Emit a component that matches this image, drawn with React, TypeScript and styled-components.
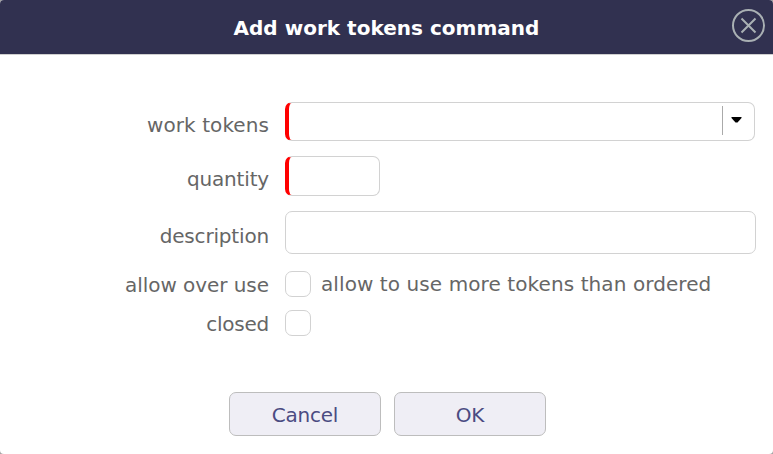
import React from "react";
import styled, { createGlobalStyle } from "styled-components";

const GlobalStyle = createGlobalStyle`
  *, *::before, *::after { box-sizing: border-box; }
  html, body { margin: 0; background: #a4a4a4; overflow: hidden; }
  body, input, button {
    font-family: Verdana, "DejaVu Sans", sans-serif;
    font-size: 20px;
  }
`;

const Dialog = styled.form`
  width: 773px;
  height: 454px;
  display: flex;
  flex-direction: column;
  background: #fff;
  border-radius: 4px;
  overflow: hidden;
`;

const Header = styled.header`
  height: 55px;
  flex: none;
  display: grid;
  grid-template-columns: 50px 1fr 50px;
  align-items: center;
  background: #313150;
  border-bottom: 1px solid #cfcfcf;
`;

const Title = styled.h1`
  grid-column: 2;
  margin: 0;
  padding-top: 2px;
  text-align: center;
  font-size: 20px;
  line-height: 24px;
  font-weight: 700;
  color: #fff;
  white-space: nowrap;
  letter-spacing: 0.02px;
`;

const CloseButton = styled.button`
  width: 34px;
  height: 34px;
  margin: 0 0 4px 8px;
  padding: 0;
  border: 0;
  background: none;
  svg { display: block; }
`;

const Fields = styled.div`
  padding-top: 47px;
  display: flex;
  flex-direction: column;
`;

const Row = styled.div<{ $height: number; $gap: number }>`
  height: ${(p) => p.$height}px;
  margin-bottom: ${(p) => p.$gap}px;
  display: grid;
  grid-template-columns: 269px 1fr;
  column-gap: 16px;
  align-items: center;
`;

const Label = styled.label<{ $drop?: number; $tracking?: number }>`
  padding-top: ${(p) => (p.$drop ?? 3) * 2}px;
  letter-spacing: ${(p) => p.$tracking ?? 0}px;
  text-align: right;
  line-height: 24px;
  color: #666;
  white-space: nowrap;
`;

const Field = styled.input<{ $width: number; $required?: boolean }>`
  width: ${(p) => p.$width}px;
  height: 100%;
  padding: 0 8px;
  border: 1px solid #d2d2d2;
  border-left: ${(p) => (p.$required ? "4px solid #f00" : "1px solid #d2d2d2")};
  border-radius: 7px;
  background: #fff;
  outline: 0;
`;

const Combo = styled.div`
  width: 470px;
  height: 100%;
  display: flex;
  align-items: center;
  justify-content: flex-end;
  border: 1px solid #d2d2d2;
  border-left: 4px solid #f00;
  border-radius: 7px;
`;

const Arrow = styled.div`
  width: 32px;
  height: 29px;
  margin-bottom: 2px;
  display: flex;
  align-items: center;
  padding: 0 0 1px 8px;
  border-left: 1px solid #aaa;
`;

const CheckGroup = styled.div`
  display: flex;
  align-items: center;
  gap: 10px;
`;

const Checkbox = styled.input.attrs({ type: "checkbox" })`
  appearance: none;
  width: 26px;
  height: 26px;
  margin: 0;
  border: 1px solid #d2d2d2;
  border-radius: 7px;
  background: #fff;
`;

const Hint = styled.span`
  line-height: 24px;
  color: #666;
  white-space: nowrap;
  letter-spacing: 0.09px;
`;

const Actions = styled.div`
  margin-top: 56px;
  padding-left: 229px;
  display: flex;
  gap: 13px;
`;

const Button = styled.button`
  width: 152px;
  height: 44px;
  padding: 2px 0 0;
  border: 1px solid #bdbdbd;
  border-radius: 7px;
  background: #efeef5;
  color: #4b4b82;
  line-height: 24px;
  letter-spacing: -0.25px;
`;

export default function App() {
  return (
    <>
      <GlobalStyle />
      <Dialog>
        <Header>
          <Title>Add work tokens command</Title>
          <CloseButton type="button" aria-label="Close">
            <svg width="34" height="34" viewBox="0 0 34 34" fill="none" stroke="#a9b0b3" strokeWidth="2">
              <circle cx="17.5" cy="17.5" r="15.5" />
              <path d="M10.5 10.5L24.5 24.5M24.5 10.5L10.5 24.5" />
            </svg>
          </CloseButton>
        </Header>
        <Fields>
          <Row $height={39} $gap={15}>
            <Label $tracking={0.08}>work tokens</Label>
            <Combo>
              <Arrow>
                <svg width="11" height="6" viewBox="0 0 11 6">
                  <path d="M0.5 0H10.5V1L6.5 5.5H4.5L0.5 1Z" fill="#000" />
                </svg>
              </Arrow>
            </Combo>
          </Row>
          <Row $height={40} $gap={15}>
            <Label $tracking={-0.17}>quantity</Label>
            <Field $width={95} $required />
          </Row>
          <Row $height={43} $gap={17}>
            <Label $tracking={-0.17}>description</Label>
            <Field $width={471} />
          </Row>
          <Row $height={26} $gap={13}>
            <Label $drop={1} $tracking={-0.05}>allow over use</Label>
            <CheckGroup>
              <Checkbox />
              <Hint>allow to use more tokens than ordered</Hint>
            </CheckGroup>
          </Row>
          <Row $height={26} $gap={0}>
            <Label $drop={1} $tracking={-0.25}>closed</Label>
            <Checkbox />
          </Row>
        </Fields>
        <Actions>
          <Button type="button">Cancel</Button>
          <Button type="button">OK</Button>
        </Actions>
      </Dialog>
    </>
  );
}
